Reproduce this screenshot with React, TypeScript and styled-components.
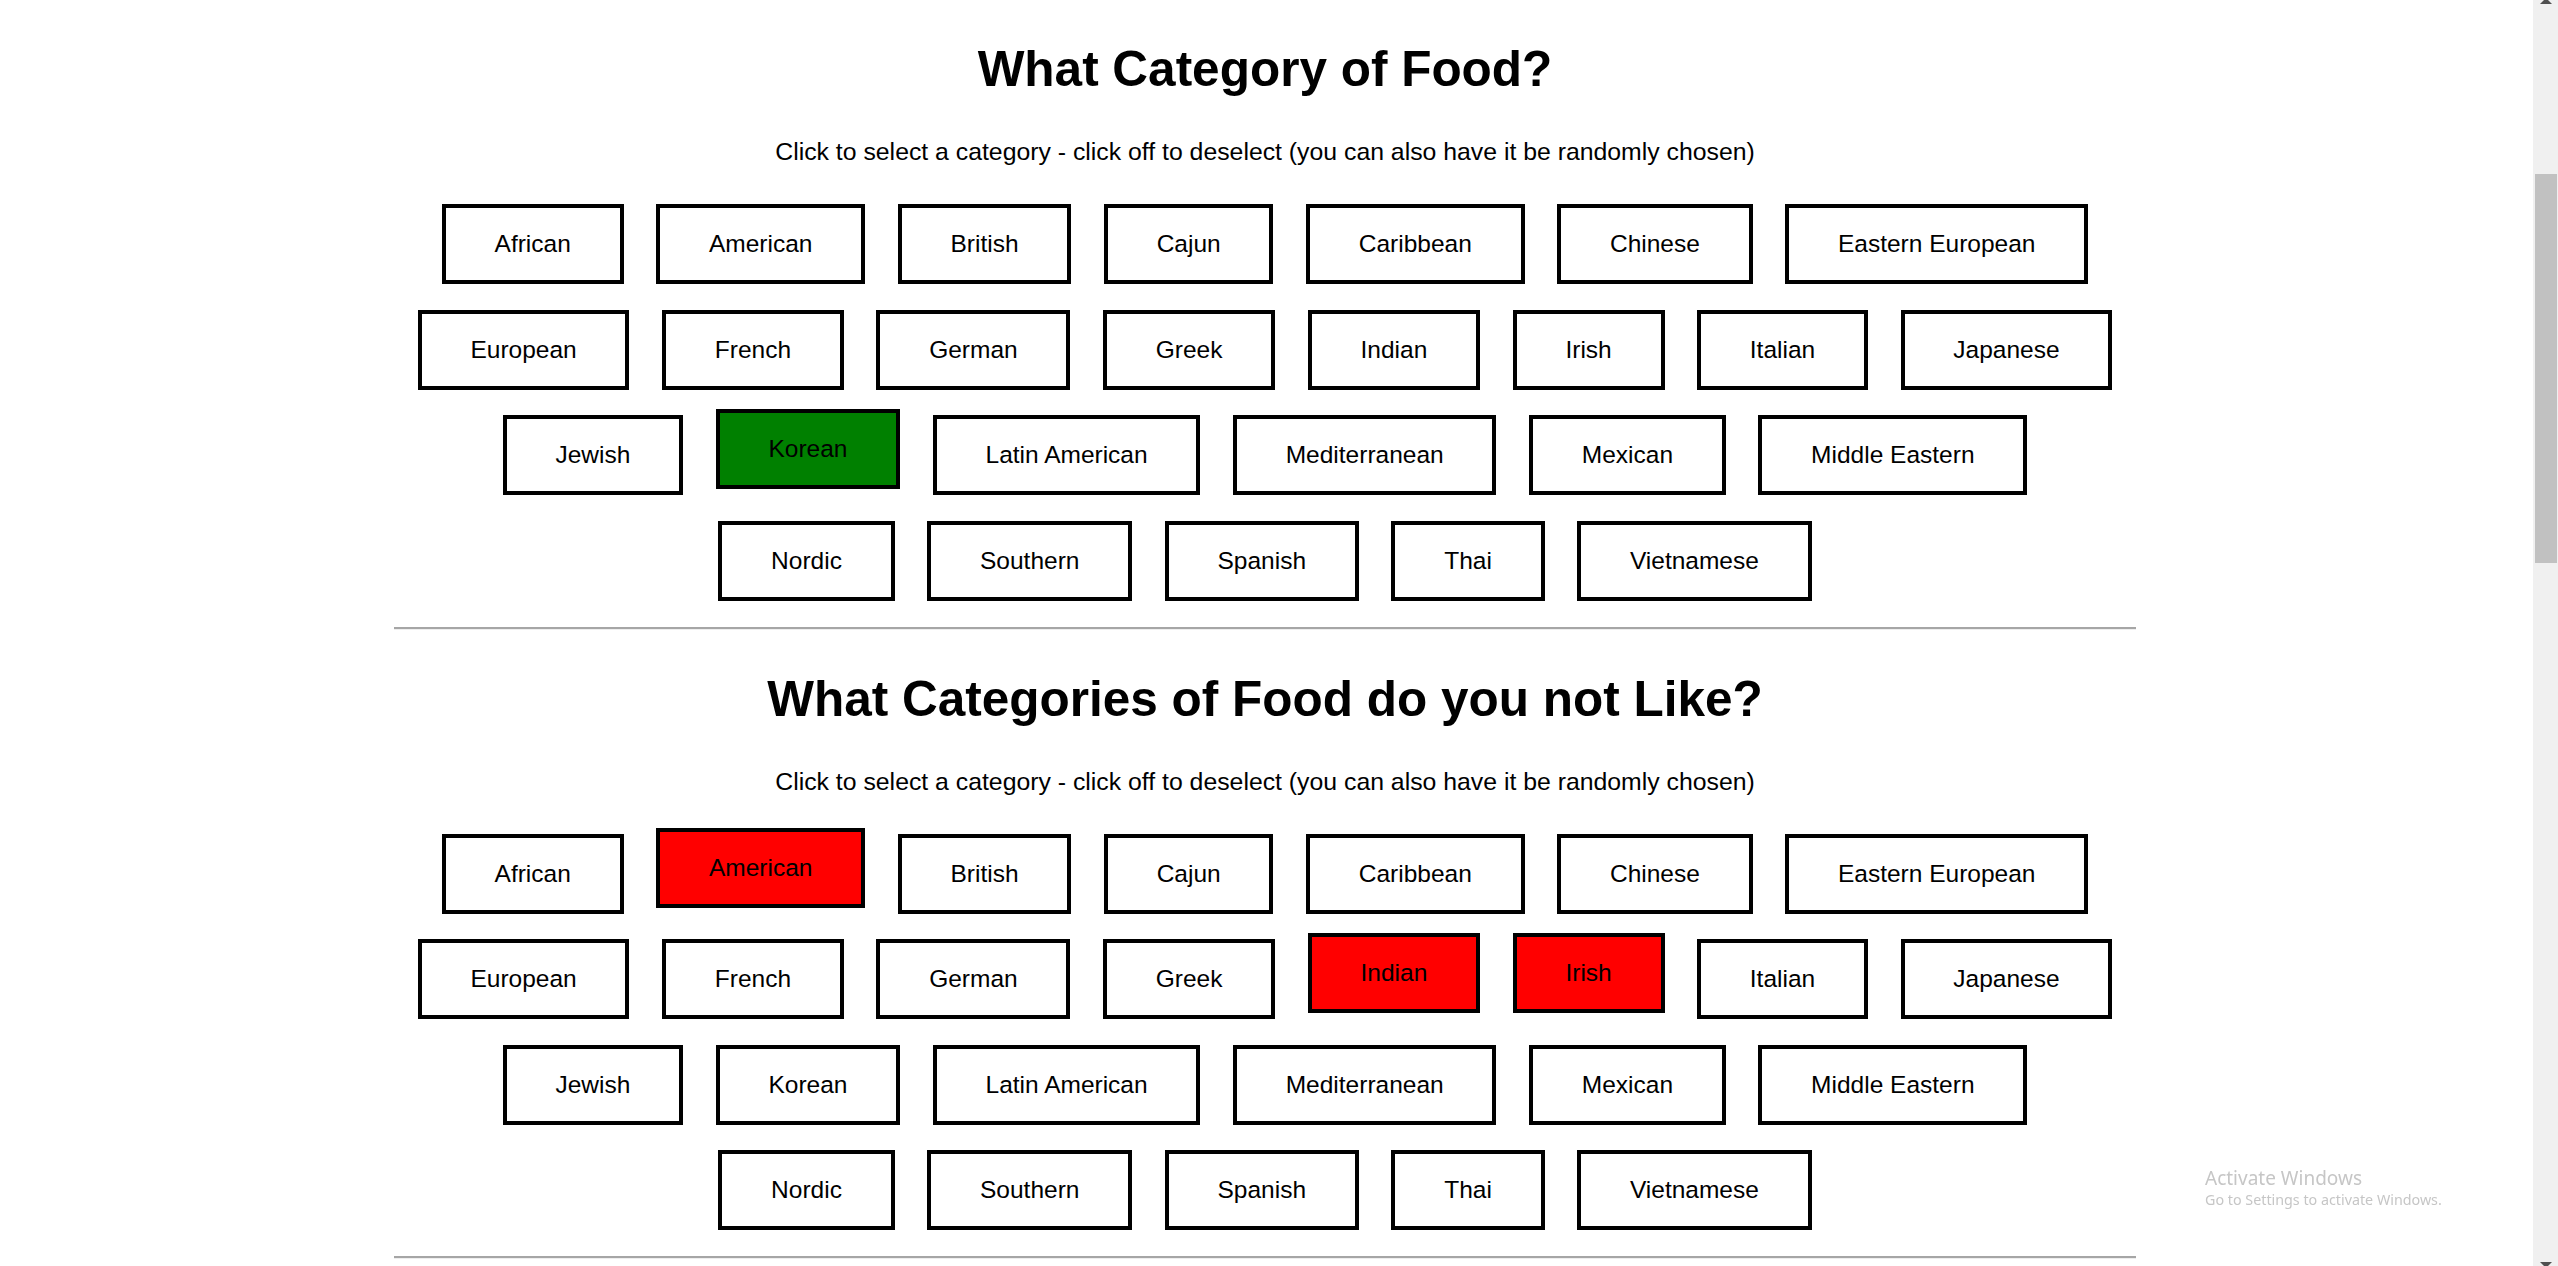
import React, { useState } from 'react';
import styled, { createGlobalStyle } from 'styled-components';

const categories = [
  'African',
  'American',
  'British',
  'Cajun',
  'Caribbean',
  'Chinese',
  'Eastern European',
  'European',
  'French',
  'German',
  'Greek',
  'Indian',
  'Irish',
  'Italian',
  'Japanese',
  'Jewish',
  'Korean',
  'Latin American',
  'Mediterranean',
  'Mexican',
  'Middle Eastern',
  'Nordic',
  'Southern',
  'Spanish',
  'Thai',
  'Vietnamese',
];

const GlobalStyle = createGlobalStyle`
  html, body {
    margin: 0;
    padding: 0;
    background: #fff;
    overflow: hidden;
  }
  body {
    font-family: "Liberation Sans", Arial, sans-serif;
    color: #000;
  }
`;

const Page = styled.div`
  margin-right: 28px;
  display: flex;
  flex-direction: column;
  align-items: center;
`;

const Section = styled.section`
  width: 1742px;
  display: flex;
  flex-direction: column;
  align-items: center;
  padding-top: 41px;
`;

const Title = styled.h1`
  margin: 0;
  font-size: 49.5px;
  line-height: 56px;
  font-weight: bold;
  text-align: center;
`;

const Hint = styled.p`
  margin: 41px 0 0;
  font-size: 24.8px;
  line-height: 28px;
  text-align: center;
`;

const Grid = styled.div`
  width: 1710px;
  margin-top: 38px;
  display: flex;
  flex-wrap: wrap;
  justify-content: center;
  column-gap: 32.5px;
  row-gap: 25.5px;
`;

const CategoryButton = styled.button<{ $picked: boolean; $tone: string }>`
  font-family: inherit;
  font-size: 24.5px;
  line-height: 28px;
  color: #000;
  padding: 22px 48.8px;
  border: 4px solid #000;
  border-radius: 0;
  background: ${(p) => (p.$picked ? p.$tone : '#fff')};
  transform: ${(p) => (p.$picked ? 'translateY(-6px)' : 'none')};
  cursor: pointer;
  white-space: nowrap;
`;

const Divider = styled.hr`
  width: 100%;
  margin: 26px 0 0;
  border: none;
  border-top: 2px solid #a6a6a6;
  border-bottom: 1px solid #eeeeee;
`;

const ScrollTrack = styled.div`
  position: fixed;
  top: 0;
  right: 0;
  width: 25px;
  height: 100vh;
  background: #f0f0f0;
  overflow: hidden;
`;

const ScrollThumb = styled.div`
  position: absolute;
  top: 174px;
  left: 2px;
  width: 22px;
  height: 389px;
  background: #c1c1c1;
`;

const Arrow = styled.div<{ $down?: boolean }>`
  position: absolute;
  left: 7px;
  width: 0;
  height: 0;
  border-left: 6px solid transparent;
  border-right: 6px solid transparent;
  ${(p) =>
    p.$down
      ? 'bottom: -2px; border-top: 6px solid #505050;'
      : 'top: -2px; border-bottom: 6px solid #505050;'}
`;

const Watermark = styled.div`
  position: fixed;
  left: 2205px;
  top: 1167px;
  font-family: "Noto Sans", "Open Sans", sans-serif;
  color: #c6c6c6;
  pointer-events: none;
`;

const WatermarkTitle = styled.div`
  font-size: 19px;
  line-height: 22px;
`;

const WatermarkSub = styled.div`
  margin-top: 2px;
  font-size: 14.3px;
  line-height: 18px;
`;

interface PickerProps {
  title: string;
  tone: string;
  picked: string[];
  onToggle: (name: string) => void;
}

const CategoryPicker: React.FC<PickerProps> = ({ title, tone, picked, onToggle }) => {
  return (
    <Section>
      <Title>{title}</Title>
      <Hint>Click to select a category - click off to deselect (you can also have it be randomly chosen)</Hint>
      <Grid>
        {categories.map((name) => (
          <CategoryButton
            key={name}
            $picked={picked.includes(name)}
            $tone={tone}
            onClick={() => onToggle(name)}
          >
            {name}
          </CategoryButton>
        ))}
      </Grid>
      <Divider />
    </Section>
  );
};

const toggle = (list: string[], name: string) =>
  list.includes(name) ? list.filter((n) => n !== name) : [...list, name];

const App: React.FC = () => {
  const [liked, setLiked] = useState<string[]>(['Korean']);
  const [disliked, setDisliked] = useState<string[]>(['American', 'Indian', 'Irish']);

  return (
    <>
      <GlobalStyle />
      <Page>
        <CategoryPicker
          title="What Category of Food?"
          tone="#008000"
          picked={liked}
          onToggle={(name) => setLiked((l) => toggle(l, name))}
        />
        <CategoryPicker
          title="What Categories of Food do you not Like?"
          tone="#ff0000"
          picked={disliked}
          onToggle={(name) => setDisliked((l) => toggle(l, name))}
        />
      </Page>
      <ScrollTrack>
        <Arrow />
        <ScrollThumb />
        <Arrow $down />
      </ScrollTrack>
      <Watermark>
        <WatermarkTitle>Activate Windows</WatermarkTitle>
        <WatermarkSub>Go to Settings to activate Windows.</WatermarkSub>
      </Watermark>
    </>
  );
};

export default App;
